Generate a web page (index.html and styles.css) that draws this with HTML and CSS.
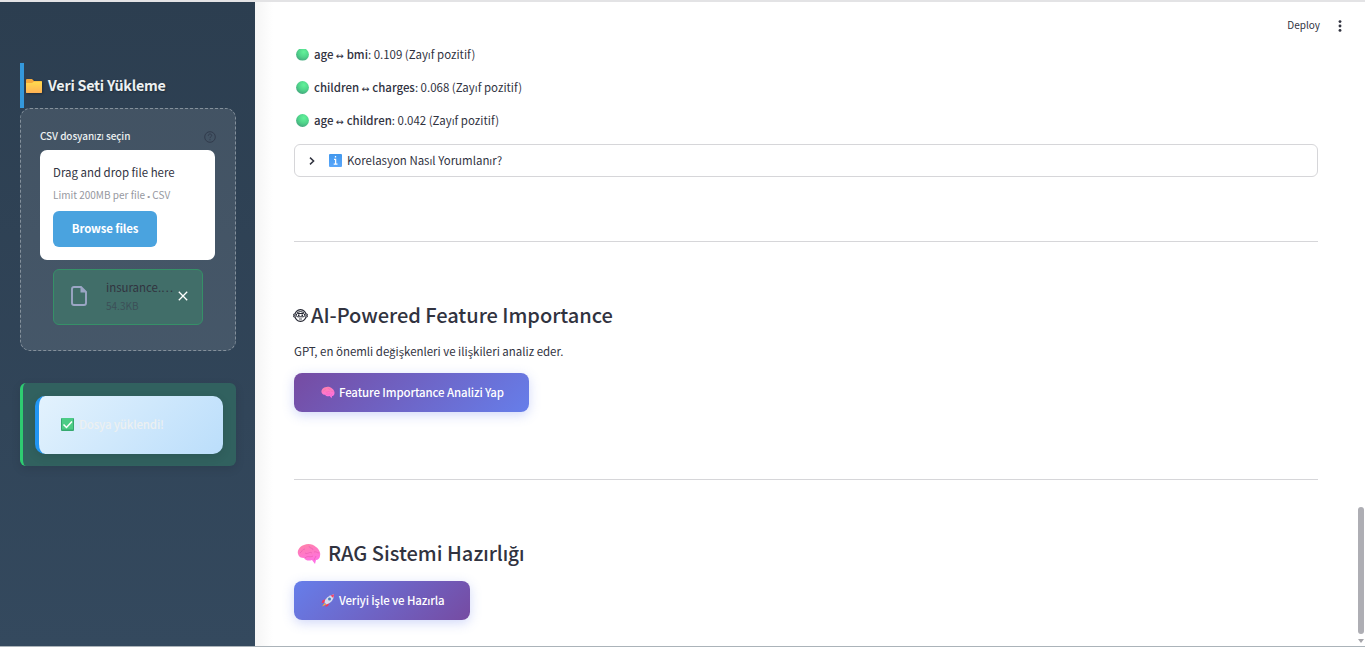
FILE: index.html
```html
<!DOCTYPE html>
<html lang="tr">
<head>
<meta charset="utf-8">
<title>Veri Analizi</title>
<link rel="stylesheet" href="styles.css">
</head>
<body>
<svg class="defs" aria-hidden="true">
  <defs>
    <linearGradient id="folder" x2="0" y2="1"><stop stop-color="#ffdb4e"/><stop offset="1" stop-color="#ffb255"/></linearGradient>
    <radialGradient id="ball" cx=".6" cy=".3" r=".75"><stop stop-color="#62f29a"/><stop offset=".55" stop-color="#50d48b"/><stop offset="1" stop-color="#43a47c"/></radialGradient>
    <linearGradient id="pink" x2=".3" y2="1"><stop stop-color="#ff83a5"/><stop offset="1" stop-color="#ff70e4"/></linearGradient>
    <linearGradient id="info" x2="0" y2="1"><stop stop-color="#4298ed"/><stop offset="1" stop-color="#5aa7fb"/></linearGradient>
    <symbol id="brain" viewBox="0 0 24 22">
      <path d="M1 11C0 7 3 3 7 2c4-2 9-1 12 2 3 2 5 6 4 9 0 2-2 4-4 4l-1 4-3-4c-3 1-6 1-8-2-3 0-5-1-6-4z" fill="url(#pink)"/>
      <path d="M3 10c2-1 2-4 5-4M8 10c3 2 4-2 7 0M12 3c0 3 4 1 4 4M17 9c2-1 3 1 5 1M8 15c3-3 5 0 8-2M19 13l-2 4" fill="none" stroke="#ee62b4" stroke-width=".8"/>
    </symbol>
  </defs>
</svg>
<div class="app">
  <aside class="sidebar">
    <h2 class="side-title">
      <svg class="folder" viewBox="0 0 16 14"><path d="M0 1q0-1 1-1h5l2 2h7q1 0 1 1v10q0 1-1 1H1q-1 0-1-1z" fill="#f5a83c"/><path d="M0 4h6l2-1.500h8V13q0 1-1 1H1q-1 0-1-1z" fill="url(#folder)"/></svg>
      <span>Veri Seti Yükleme</span>
    </h2>
    <section class="uploader">
      <div class="label-row">
        <span>CSV dosyanızı seçin</span>
        <svg class="help" viewBox="0 0 12 12" fill="none" stroke="#313b4c"><circle cx="6" cy="6" r="5.300"/><path d="M4.300 4.700c0-2.300 3.400-2.200 3.400-.2C7.700 5.800 6 5.700 6 7.200M6 8.200v1"/></svg>
      </div>
      <div class="dropzone">
        <div class="drop-title"><span>Drag and drop file here</span></div>
        <div class="drop-limit"><span>Limit 200MB per file <i class="bullet">•</i> CSV</span></div>
        <button class="browse"><span>Browse files</span></button>
      </div>
      <div class="file">
        <svg class="doc" viewBox="0 0 16 20"><path d="M3 1h7l5 5v11q0 2-2 2H3q-2 0-2-2V3q0-2 2-2z" fill="none" stroke="#9ba6c5" stroke-width="1.900"/><path d="M9.500 1v5.500H15z" fill="#9ba6c5"/></svg>
        <div class="file-info">
          <div class="file-name"><span>insurance.…</span></div>
          <div class="file-size"><span>54.3KB</span></div>
        </div>
        <svg class="close" viewBox="0 0 10 10"><path d="M.8.800l8.400 8.400M9.200.8.800 9.200" stroke="#fff" stroke-width="1.300"/></svg>
      </div>
    </section>
    <section class="success">
      <div class="alert">
        <svg class="check" viewBox="0 0 13 13"><rect width="13" height="13" rx="1" fill="#35a96f"/><rect x="1" width="11" height="11.500" fill="#4ccc86"/><path d="M2.500 6.500l3 3L11 3.500" fill="none" stroke="#fff" stroke-width="1.500"/></svg>
        <span>Dosya yüklendi!</span>
      </div>
    </section>
  </aside>
  <main class="main">
    <header class="toolbar">
      <span>Deploy</span>
      <svg class="kebab" viewBox="0 0 4 12"><circle cx="2" cy="1.600" r="1.450"/><circle cx="2" cy="6" r="1.450"/><circle cx="2" cy="10.400" r="1.450"/></svg>
    </header>
    <div class="content">
      <ul class="pairs">
        <li class="pair clipped"><svg class="ball" viewBox="0 0 13 13"><circle cx="6.500" cy="6.500" r="6.400" fill="url(#ball)"/></svg><span><b>age</b> <i class="arrow">↔</i> <b>bmi</b>: 0.109 (Zayıf pozitif)</span></li>
        <li class="pair"><svg class="ball" viewBox="0 0 13 13"><circle cx="6.500" cy="6.500" r="6.400" fill="url(#ball)"/></svg><span><b>children</b> <i class="arrow">↔</i> <b>charges</b>: 0.068 (Zayıf pozitif)</span></li>
        <li class="pair"><svg class="ball" viewBox="0 0 13 13"><circle cx="6.500" cy="6.500" r="6.400" fill="url(#ball)"/></svg><span><b>age</b> <i class="arrow">↔</i> <b>children</b>: 0.042 (Zayıf pozitif)</span></li>
      </ul>
      <div class="expander">
        <svg class="chevron" viewBox="0 0 6 8"><path d="M1 .6 4.600 4 1 7.400" fill="none" stroke="#31333f" stroke-width="1.500"/></svg>
        <svg class="info" viewBox="0 0 13 13"><rect width="13" height="13" rx="1" fill="url(#info)"/><path d="M6.500 2v1.600M5 5.300h1.600V10M4.700 10.200h3.800" fill="none" stroke="#fff" stroke-width="1.300"/></svg>
        <span>Korelasyon Nasıl Yorumlanır?</span>
      </div>
      <hr class="rule first">
      <h3 class="heading ai">
        <svg class="robot" viewBox="0 0 15 13" fill="none" stroke="#252733"><ellipse cx="7.500" cy="6.500" rx="5.700" ry="5.800" stroke-width="1.200"/><path d="M1.300 4.500C0 5 0 8 1.300 8.500M13.700 4.500C15 5 15 8 13.700 8.500M4 3.500q3.500-2 7 0"/><rect x="3.300" y="4.500" width="8.400" height="3.300" rx="1.500"/><path d="M5 6.200h1.500M8.500 6.200H10" stroke-width="1.600"/><path d="M6 10h3" stroke-width=".8"/></svg>
        <span class="ai-text">AI-Powered Feature Importance</span>
      </h3>
      <p class="caption"><span>GPT, en önemli değişkenleri ve ilişkileri analiz eder.</span></p>
      <button class="action analyse"><svg class="brain-s"><use href="#brain"/></svg><span>Feature Importance Analizi Yap</span></button>
      <hr class="rule second">
      <h3 class="heading rag">
        <svg class="brain-l"><use href="#brain"/></svg>
        <span>RAG Sistemi Haz<i class="tr">ı</i>rl<i class="tr">ığı</i></span>
      </h3>
      <button class="action prepare"><svg class="rocket" viewBox="0 0 13 13"><path d="M4 5 1 6.500 0 9l3-.5zM8 9l-1.500 3-2.500 1 .5-3z" fill="#f2385a"/><path d="M3 8.500Q4 2 12.500.300 12.500 8 5 10.500z" fill="#d5dcef"/><path d="M9 1.400 12.700.200 11.700 4z" fill="#f64167"/><circle cx="8" cy="5" r="1.500" fill="#4a7fbd"/><path d="M3 9 .5 12.600 4.500 10.500z" fill="#ffaf36"/></svg><span>Veriyi <i class="tr">İş</i>le ve Haz<i class="tr">ı</i>rla</span></button>
    </div>
  </main>
  <div class="scrollbar"><div class="thumb"></div><div class="down"></div></div>
</div>
</body>
</html>
```
FILE: styles.css
```css
* { box-sizing: border-box; }
body { margin: 0; overflow: hidden; background: #fff; color: #31333f; font: 11.46px/20px "Noto Sans CJK SC", "Open Sans", sans-serif; }
h2, h3, p, ul { margin: 0; padding: 0; }
svg { display: block; flex: none; }
span { white-space: nowrap; }
i { font-style: normal; }
button { border: 0; font: inherit; padding: 0; display: flex; align-items: center; color: #fff; }
button span, h2 span, h3 span, .alert span, .expander span { margin-bottom: 2px; }
.tr { font-family: "Open Sans", sans-serif; font-weight: 600; font-size: .97em; line-height: 1; }
.defs { position: absolute; width: 0; height: 0; }
.app { display: flex; width: 1365px; height: 647px; border-top: 2px solid #e3e3e5; border-bottom: 1px solid #abb3b9; }

.sidebar { width: 255px; flex: none; padding: 61px 19px 0 20px; background: linear-gradient(180deg, #2c3e50, #34495e); }
.side-title { height: 45px; border-left: 4px solid #3498db; padding-left: 2px; display: flex; align-items: center; gap: 6px; color: #ecf0f1; font-size: 14.3px; font-weight: 700; letter-spacing: -.24px; text-shadow: 1px 1px 2px rgba(0,0,0,.35); }
.folder { width: 16px; height: 14px; filter: drop-shadow(1px 1px 1px rgba(0,0,0,.3)); }
.uploader { width: 216px; height: 243px; border: 1px dashed #84909b; border-radius: 10px; background: rgba(255,255,255,.1); padding: 17px 19px 0; }
.label-row { height: 24px; padding-bottom: 3px; display: flex; justify-content: space-between; align-items: center; color: #ecf0f1; font-size: 10px; font-weight: 500; letter-spacing: -.08px; }
.label-row span { margin-bottom: 2px; }
.help { width: 12px; height: 12px; margin-top: 1px; }
.dropzone { width: 175px; height: 110px; border-radius: 7px; background: #fff; padding: 12px 13px 13px; }
.drop-title { height: 20px; }
.drop-limit { height: 20px; margin-top: 3px; margin-bottom: 6px; color: #9698a0; font-size: 10px; }
.bullet { font: 8px "Liberation Sans", sans-serif; }
.browse { width: 104px; height: 36px; justify-content: center; border-radius: 6px; background: #4aa3df; font-weight: 700; letter-spacing: -.15px; }
.file { margin: 9px 0 0 13px; width: 150px; height: 56px; border: 1px solid #369068; border-radius: 6px; background: #416e69; display: flex; align-items: center; padding-left: 17px; }
.doc { width: 16px; height: 20px; margin-bottom: 3px; }
.file-info { margin-left: 19px; width: 68px; height: 40px; }
.file-name { height: 19px; color: #31333f; }
.file-size { height: 18px; color: #3c5058; font-size: 10px; }
.close { width: 10px; height: 10px; margin-left: 4px; margin-bottom: 2px; }
.success { width: 216px; height: 83px; margin-top: 32px; border-left: 3px solid #2ecc71; border-radius: 6px; background: #31615f; padding: 13px 13px 0 12px; box-shadow: 0 3px 10px rgba(0,0,0,.1); }
.alert { height: 58px; border-left: 4px solid #2196f3; border-radius: 10px; background: linear-gradient(135deg, #e3f2fd, #bbdefb); display: flex; align-items: center; gap: 5px; padding-left: 22px; color: #ecf0f1; font-weight: 500; letter-spacing: -.15px; box-shadow: 0 3px 10px rgba(0,0,0,.1); }
.check { width: 13px; height: 13px; margin-bottom: 1px; }

.main { flex: 1; background: linear-gradient(90deg, #f5f5f5, #fff 18px); }
.toolbar { height: 46px; padding-right: 15px; display: flex; align-items: center; justify-content: flex-end; gap: 18px; font-size: 10px; }
.kebab { width: 4px; height: 12px; margin-top: 2px; fill: #31333f; }
.content { padding-left: 39px; width: 1063px; }
.pairs { list-style: none; height: 96px; margin-top: -6px; }
.pair { height: 33px; display: flex; align-items: center; padding: 0 0 9px 2px; gap: 5px; }
.pair b { font-weight: 500; }
.ball { width: 13px; height: 13px; }
.clipped .ball { clip-path: inset(1.500px 0 0); }
.arrow { font: 9.500px "DejaVu Sans", sans-serif; }
.expander { height: 33px; margin-top: 6px; border: 1px solid #d6d6d9; border-radius: 6px; display: flex; align-items: center; padding-left: 14px; }
.chevron { width: 6px; height: 8px; margin-right: 14px; }
.info { width: 13px; height: 13px; margin-right: 5px; margin-bottom: 1px; }
.rule { border: 0; height: 1px; background: #d6d6d9; margin: 0; }
.rule.first { margin-top: 64px; }
.rule.second { margin-top: 66px; }
.heading { height: 30px; display: flex; align-items: center; font-size: 20.05px; line-height: 30px; font-weight: 500; }
.ai { margin-top: 59px; gap: 3px; margin-left: -1px; }
.ai-text { letter-spacing: -.04px; }
.rag { margin-top: 59px; gap: 7px; padding-left: 3px; }
.robot { width: 15px; height: 13px; margin-bottom: 1px; }
.brain-l { width: 24px; height: 22px; }
.brain-s { width: 14px; height: 13px; margin-bottom: 1px; }
.caption { height: 20px; margin-top: 10px; }
.action { padding-left: 27px; gap: 4px; border-radius: 8px; font-weight: 500; letter-spacing: -.12px; box-shadow: 0 3px 12px rgba(102,126,234,.3); }
.analyse { width: 235px; height: 39px; margin-top: 12px; background: linear-gradient(135deg, #764ba2, #667eea); }
.caption + .analyse { margin-bottom: 67px; }
.rule.second { margin-top: 0; }
.prepare { width: 176px; height: 39px; margin-top: 12px; background: linear-gradient(135deg, #667eea, #764ba2); }
.rocket { width: 14px; height: 13px; margin-bottom: 1px; }

.scrollbar { width: 8px; flex: none; padding-top: 505px; }
.thumb { width: 6px; height: 127px; margin-left: 1px; border-radius: 3px; background: #aeaeb4; }
.down { margin: 5px 0 0 1px; width: 6px; height: 4px; background: #a5a5aa; clip-path: polygon(0 0, 100% 0, 50% 100%); }
```
